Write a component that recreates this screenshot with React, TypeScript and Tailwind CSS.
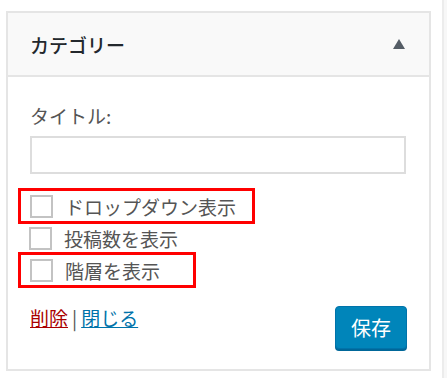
import { useState } from 'react'

const FONT = '"Noto Sans CJK JP", "Noto Sans", sans-serif'

export default function App() {
  const [checks, setChecks] = useState([false, false, false])
  const [title, setTitle] = useState('')

  const labels = ['ドロップダウン表示', '投稿数を表示', '階層を表示']
  // 赤枠で囲む項目
  const marked = [true, false, true]
  const markWidth = ['w-[237px]', '', 'w-[178px]']

  return (
    <div className="w-[447px] h-[378px] bg-white flex overflow-hidden" style={{ fontFamily: FONT }}>
      <div className="ml-[6px] mt-[11px] w-[425px] h-[360px] border-2 border-[#e5e5e5] bg-white flex flex-col">
        {/* ヘッダー */}
        <div className="h-[64px] bg-[#f9f9f9] border-b-2 border-[#e5e5e5] flex items-center justify-between pl-[22px] pr-[24px]">
          <h3 className="text-[19px] font-medium text-[#23282d] leading-none">カテゴリー</h3>
          <svg width="12" height="10" viewBox="0 0 12 10">
            <polygon points="6,0 12,10 0,10" fill="#555d66" />
          </svg>
        </div>

        <div className="flex flex-col px-[22px] pt-[24px]">
          <label className="text-[19px] text-[#555] leading-[30px]">タイトル:</label>
          <input
            className="w-[376px] h-[38px] border-2 border-[#dddddd] mt-[5px] px-2 outline-none"
            value={title}
            onChange={(e) => setTitle(e.target.value)}
          />

          <div className="flex flex-col mt-[16px] -ml-[12px]">
            {labels.map((label, i) => (
              <div
                key={label}
                className={`h-[32px] flex items-center pl-[9px] ${
                  marked[i] ? `border-[3px] border-[#ff0000] ${markWidth[i]} h-[36px] -my-[2px]` : 'border-2 border-transparent'
                }`}
              >
                <button
                  className="w-[23px] h-[23px] border-2 border-[#c3c3c3] bg-white"
                  onClick={() => setChecks(checks.map((c, j) => (j === i ? !c : c)))}
                >
                  {checks[i] && <span className="text-[#1e8cbe] text-sm">✓</span>}
                </button>
                <span className="ml-[12px] text-[19px] text-[#555] leading-none">{label}</span>
              </div>
            ))}
          </div>

          <div className="flex items-start justify-between mt-[18px]">
            <div className="text-[19px] leading-[24px] mt-[2px] text-[#555]">
              <a href="#" className="text-[#a00] underline">削除</a>
              <span className="mx-[4px]">|</span>
              <a href="#" className="text-[#0073aa] underline">閉じる</a>
            </div>
            <button className="mt-[2px] w-[72px] h-[43px] rounded-[4px] bg-[#0085ba] border border-[#0073aa] text-white text-[20px] shadow-[0_2px_0_#006799]">
              保存
            </button>
          </div>
        </div>
      </div>
      <div className="ml-auto w-[5px] h-full border-l-2 border-[#ececec] bg-[#f7f7f7]" />
    </div>
  )
}
